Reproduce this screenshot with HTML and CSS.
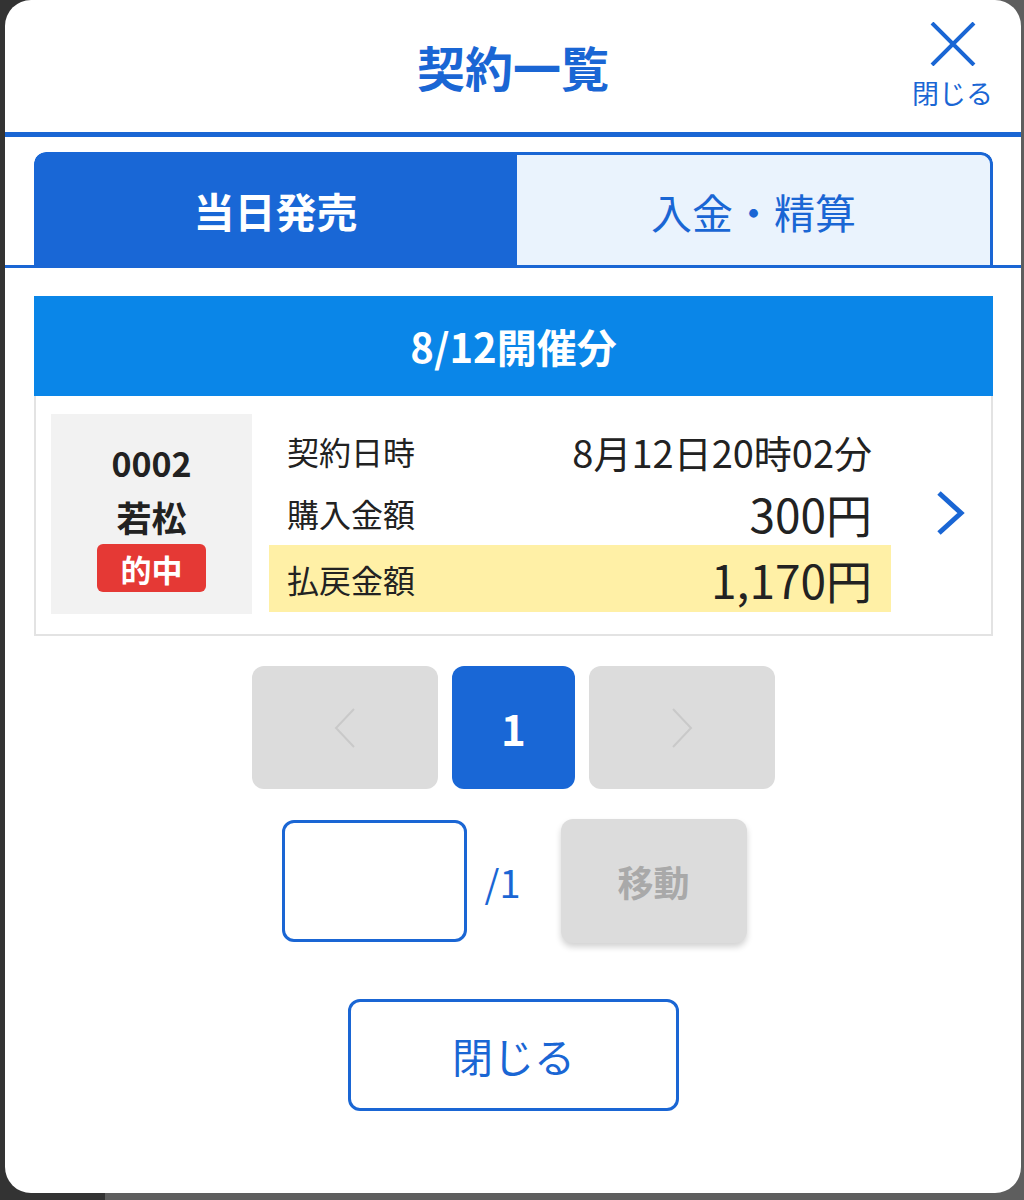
FILE: index.html
```html
<!DOCTYPE html>
<html lang="ja">
<head>
<meta charset="utf-8">
<title>契約一覧</title>
<link rel="stylesheet" href="styles.css">
</head>
<body>
<div class="modal">
  <header class="modal-header">
    <div></div>
    <h1 class="title">契約一覧</h1>
    <button class="close-x" type="button">
      <svg class="x-icon" viewBox="0 0 46 44" width="46" height="44"><path d="M2 1 L44 43 M44 1 L2 43" stroke="#1a66d4" stroke-width="4" fill="none"/></svg>
      <span class="close-label">閉じる</span>
    </button>
  </header>
  <div class="tab-bar">
    <div class="tabs">
      <div class="tab active">当日発売</div>
      <div class="tab">入金・精算</div>
    </div>
  </div>
  <div class="content">
    <div class="section-title">8/12開催分</div>
    <div class="card">
      <div class="race">
        <div class="race-no">0002</div>
        <div class="race-place">若松</div>
        <div class="badge">的中</div>
      </div>
      <div class="rows">
        <div class="row"><span class="label">契約日時</span><span class="value date">8月12日20時02分</span></div>
        <div class="row"><span class="label">購入金額</span><span class="value big">300円</span></div>
        <div class="row hit"><span class="label">払戻金額</span><span class="value big">1,170円</span></div>
      </div>
      <div class="arrow">
        <svg viewBox="0 0 30 46" width="30" height="46"><path d="M4 3 L26 23 L4 43" stroke="#1a66d4" stroke-width="5" fill="none"/></svg>
      </div>
    </div>
    <div class="pager">
      <button class="pg nav" type="button"><svg viewBox="0 0 24 42" width="24" height="42"><path d="M21 2 L3 21 L21 40" stroke="#c9c9c9" stroke-width="2" fill="none"/></svg></button>
      <button class="pg current" type="button">1</button>
      <button class="pg nav" type="button"><svg viewBox="0 0 24 42" width="24" height="42"><path d="M3 2 L21 21 L3 40" stroke="#c9c9c9" stroke-width="2" fill="none"/></svg></button>
    </div>
    <div class="jump">
      <div class="page-input"></div>
      <span class="total">/1</span>
      <button class="move" type="button">移動</button>
    </div>
    <div class="footer">
      <button class="close-btn" type="button">閉じる</button>
    </div>
  </div>
</div>
</body>
</html>
```
FILE: styles.css
```css
html, body {
  margin: 0;
  padding: 0;
}
body {
  width: 1024px;
  height: 1200px;
  background: linear-gradient(to right, #333333 0, #333333 105px, #5e5e5e 105px);
  font-family: "Noto Sans CJK JP", "Noto Sans", sans-serif;
  overflow: hidden;
}
button {
  font-family: inherit;
  border: none;
  padding: 0;
  cursor: pointer;
}
.modal {
  margin-left: 5px;
  width: 1016px;
  height: 1193px;
  background: #ffffff;
  border-radius: 26px;
  overflow: hidden;
}
.modal-header {
  height: 132px;
  border-bottom: 5px solid #1a66d4;
  display: grid;
  grid-template-columns: 1fr auto 1fr;
  align-items: center;
  box-sizing: content-box;
}
.title {
  margin: 0;
  font-size: 48px;
  font-weight: 700;
  color: #1a66d4;
  line-height: 1;
  padding-top: 0;
}
.close-x {
  justify-self: end;
  margin-right: 28px;
  margin-top: -4px;
  background: transparent;
  display: flex;
  flex-direction: column;
  align-items: center;
  color: #1a66d4;
}
.x-icon {
  display: block;
}
.close-label {
  font-size: 27px;
  line-height: 1;
  margin-top: 13px;
  color: #1a66d4;
}
.tab-bar {
  padding: 15px 28px 0 29px;
  border-bottom: 3px solid #1a66d4;
}
.tabs {
  display: flex;
  height: 113px;
  border-radius: 12px 12px 0 0;
  overflow: hidden;
}
.tab {
  flex: 1;
  display: flex;
  align-items: center;
  justify-content: center;
  font-size: 41px;
  color: #1a66d4;
  background: #eaf3fd;
  border: 3px solid #1a66d4;
  border-bottom: none;
  border-left: none;
  border-radius: 0 12px 0 0;
  padding-top: 2px;
  box-sizing: border-box;
}
.tab.active {
  background: #1967d6;
  color: #ffffff;
  font-weight: 700;
  border: none;
  border-radius: 12px 0 0 0;
  flex: 0 0 483px;
}
.content {
  padding: 28px 28px 0 29px;
}
.section-title {
  height: 100px;
  background: #0a86e8;
  color: #ffffff;
  font-weight: 700;
  font-size: 40px;
  display: flex;
  align-items: center;
  justify-content: center;
}
.card {
  display: flex;
  border: 2px solid #e3e3e3;
  border-top: none;
  padding: 18px 0 20px 15px;
  height: 240px;
  box-sizing: border-box;
}
.race {
  width: 201px;
  height: 200px;
  background: #f2f2f2;
  display: flex;
  flex-direction: column;
  align-items: center;
  justify-content: center;
  color: #222222;
  font-weight: 700;
}
.race-no {
  font-size: 34px;
  line-height: 1;
  margin-top: 10px;
}
.race-place {
  font-size: 35px;
  line-height: 1;
  margin-top: 19px;
}
.badge {
  margin-top: 10px;
  width: 109px;
  height: 48px;
  border-radius: 6px;
  background: #e53935;
  color: #ffffff;
  font-size: 31px;
  display: flex;
  align-items: center;
  justify-content: center;
}
.rows {
  margin-left: 17px;
  width: 622px;
  display: flex;
  flex-direction: column;
  padding-top: 8px;
}
.row {
  height: 65px;
  display: flex;
  align-items: center;
  justify-content: space-between;
  padding: 0 19px 0 18px;
  color: #222222;
}
.row:first-child {
  height: 58px;
}
.row.hit {
  background: #fff0a6;
  height: 67px;
}
.label {
  font-size: 32px;
}
.value.date {
  font-size: 38px;
}
.value.big {
  font-size: 46px;
}
.arrow {
  flex: 1;
  display: flex;
  align-items: center;
  justify-content: center;
  padding-left: 18px;
  margin-top: -2px;
}
.pager {
  margin-top: 30px;
  display: flex;
  justify-content: center;
  gap: 14px;
}
.pg {
  height: 123px;
  border-radius: 12px;
  display: flex;
  align-items: center;
  justify-content: center;
}
.pg.nav {
  width: 186px;
  background: #dcdcdc;
}
.pg.current {
  width: 123px;
  background: #1967d6;
  color: #ffffff;
  font-size: 42px;
  font-weight: 700;
}
.jump {
  margin-top: 30px;
  display: flex;
  justify-content: center;
  align-items: center;
  padding-left: 1px;
}
.page-input {
  width: 185px;
  height: 122px;
  border: 3px solid #1a66d4;
  border-radius: 12px;
  box-sizing: border-box;
}
.total {
  font-size: 38px;
  color: #1a66d4;
  margin: 0 40px 0 18px;
}
.move {
  width: 186px;
  height: 124px;
  border-radius: 12px;
  background: #dcdcdc;
  color: #a9a9a9;
  font-size: 36px;
  font-weight: 700;
  box-shadow: 0 4px 6px rgba(0, 0, 0, 0.18);
}
.footer {
  margin-top: 56px;
  display: flex;
  justify-content: center;
}
.close-btn {
  width: 331px;
  height: 112px;
  border: 3px solid #1a66d4;
  border-radius: 12px;
  background: #ffffff;
  color: #1a66d4;
  font-size: 41px;
  box-sizing: border-box;
}
```
